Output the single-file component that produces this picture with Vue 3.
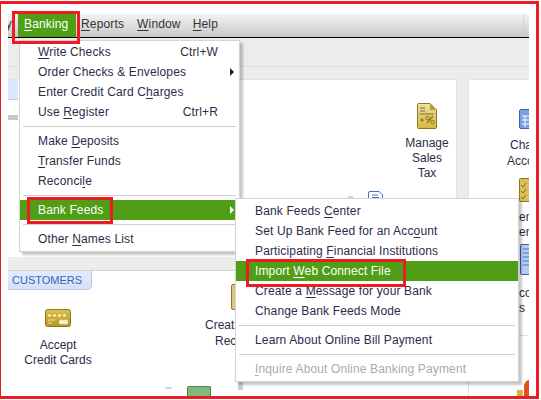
<script setup>
const top = [
  { b: 'y', cls: 'clip' },
  { b: '', k: 'B', a: 'anking', cls: 'active' },
  { b: '', k: 'R', a: 'eports' },
  { b: '', k: 'W', a: 'indow' },
  { b: '', k: 'H', a: 'elp' }
]
const main = [
  { b: '', k: 'W', a: 'rite Checks', s: 'Ctrl+W' },
  { b: 'Order Checks & Envelopes', arrow: true },
  { b: 'Enter Credit Card C', k: 'h', a: 'arges' },
  { b: 'Use ', k: 'R', a: 'egister', s: 'Ctrl+R' },
  { sep: true },
  { b: 'Make ', k: 'D', a: 'eposits' },
  { b: '', k: 'T', a: 'ransfer Funds' },
  { b: 'Reconci', k: 'l', a: 'e' },
  { sep: true },
  { b: 'Bank Feeds', arrow: true, on: true },
  { sep: true },
  { b: 'Other ', k: 'N', a: 'ames List' }
]
const sub = [
  { b: 'Bank Feeds ', k: 'C', a: 'enter' },
  { b: 'Set Up Bank Feed for an Acc', k: 'o', a: 'unt' },
  { b: 'Participating ', k: 'F', a: 'inancial Institutions' },
  { b: 'Import ', k: 'W', a: 'eb Connect File', on: true },
  { b: 'Create a ', k: 'M', a: 'essage for your Bank' },
  { b: 'Change Bank Feeds Mode' },
  { sep: true },
  { b: 'Learn About Online Bill Payment' },
  { sep: true },
  { b: '', k: 'I', a: 'nquire About Online Banking Payment', off: true }
]
</script>

<template>
  <div class="frame">
    <div class="bar">
      <span v-for="t in top" :key="t.b + t.a" class="bar-item" :class="t.cls">{{ t.b }}<u v-if="t.k">{{ t.k }}</u>{{ t.a }}</span>
      <i class="bar-rule"></i>
    </div>
    <div class="strip"></div>
    <div class="work">
      <div class="col-left">
        <section class="panel upper">
          <i class="tab-stub"></i>
          <i class="grey-stub"></i>
          <figure class="node tax">
            <svg width="20" height="26" viewBox="0 0 20 26">
              <defs><linearGradient id="g1" x1="0" y1="0" x2="0" y2="1"><stop offset="0" stop-color="#efe0a0"/><stop offset="1" stop-color="#d8b83c"/></linearGradient></defs>
              <path d="M1.500 .5H13L19.500 7V24.500a1 1 0 0 1-1 1H1.500a1 1 0 0 1-1-1V1.500a1 1 0 0 1 1-1Z" fill="url(#g1)" stroke="#8f7420"/>
              <path d="M13 .5V7H19.500Z" fill="#b89a3c"/>
              <path d="M3 5H8M3 8H8M2.500 11H17" stroke="#7c6a28" stroke-width="1"/>
              <path d="M3 17H7M5 15V19M10 20L16 13" stroke="#8a7426" stroke-width="1.200" fill="none"/>
              <circle cx="10.500" cy="15" r="1.800" fill="none" stroke="#8a7426"/><circle cx="15.500" cy="19" r="1.800" fill="none" stroke="#8a7426"/>
            </svg>
            <figcaption>Manage<br>Sales<br>Tax</figcaption>
          </figure>
          <svg class="peek-doc" width="15" height="8" viewBox="0 0 15 8"><path d="M.5 8V2a1.500 1.500 0 0 1 1.500-1.500H11L14.500 4V8Z" fill="#fff" stroke="#4a6fc0"/><path d="M4 4H10M4 6.500H11" stroke="#4a6fc0"/></svg>
          <i class="bump b1"></i>
        </section>
        <section class="panel lower">
          <div class="tab">CUSTOMERS</div>
          <figure class="node accept">
            <svg width="26" height="18" viewBox="0 0 26 18">
              <defs><linearGradient id="g2" x1="0" y1="0" x2="0" y2="1"><stop offset="0" stop-color="#dcc050"/><stop offset="1" stop-color="#b8961e"/></linearGradient></defs>
              <rect x=".5" y=".5" width="25" height="17" rx="2" fill="url(#g2)" stroke="#8f7a20"/>
              <path d="M3 6.500H6M8 6.500H11M13 6.500H16M18 6.500H21" stroke="#fff6cc" stroke-width="2"/>
              <path d="M3 11H10M3 14H7" stroke="#f2e4a0"/>
              <circle cx="16.500" cy="13" r="2.500" fill="#f6efcc"/><circle cx="20.500" cy="13" r="2.500" fill="#f6efcc"/>
            </svg>
            <figcaption>Accept<br>Credit Cards</figcaption>
          </figure>
          <i class="peek-rec"></i>
          <p class="label create">Creat<br>&nbsp;&nbsp;&nbsp;Rec</p>
          <i class="stub-v"></i>
          <i class="bump b2"></i>
          <i class="peek-green"></i>
          <i class="bump b3"></i>
        </section>
      </div>
      <div class="col-right">
        <section class="panel r-top">
          <svg class="peek-blue" width="10" height="20" viewBox="0 0 10 20"><rect x=".5" y=".5" width="20" height="19" rx="1.500" fill="#7f9fe4" stroke="#3d62b4"/><path d="M3 7H10M3 11H10M3 15H10M6 7V18" stroke="#fff"/></svg>
          <p class="label cha">Cha<br>Acco</p>
          <svg class="peek-check" width="10" height="24" viewBox="0 0 10 24"><rect x=".5" y=".5" width="20" height="23" rx="1" fill="#d8bf58" stroke="#8f7420"/><path d="M2 7L4 9L7 5M2 13L4 15L7 11M2 19L4 21L7 17" stroke="#7c6a28" fill="none"/></svg>
          <p class="label en">en<br>en</p>
          <svg class="peek-doc2" width="9" height="31" viewBox="0 0 9 31"><rect x=".5" y=".5" width="20" height="30" rx="1" fill="#b8cdf4" stroke="#3d62b4"/><path d="M3 5H9M3 9H9M3 13H9M3 17H9M3 21H9" stroke="#4a6fc0"/></svg>
          <p class="label cc">cc<br>s</p>
        </section>
        <section class="panel r-low">
          <i class="peek-yellow"></i>
          <i class="peek-orange"></i>
        </section>
      </div>
    </div>

    <div class="menu menu-main">
      <template v-for="(m, i) in main" :key="i">
        <div v-if="m.sep" class="sep"></div>
        <div v-else class="row" :class="{ on: m.on }">
          <span>{{ m.b }}<u v-if="m.k">{{ m.k }}</u>{{ m.a }}</span>
          <span v-if="m.s" class="short">{{ m.s }}</span>
          <i v-if="m.arrow" class="arrow"></i>
        </div>
      </template>
    </div>
    <div class="menu menu-sub">
      <template v-for="(m, i) in sub" :key="i">
        <div v-if="m.sep" class="sep"></div>
        <div v-else class="row" :class="{ on: m.on, off: m.off }">
          <span>{{ m.b }}<u v-if="m.k">{{ m.k }}</u>{{ m.a }}</span>
        </div>
      </template>
    </div>

    <i class="mark mark-banking"></i>
    <i class="mark mark-feeds"></i>
    <i class="mark mark-import"></i>
  </div>
</template>

<style>
html, body { margin: 0; background: #fff; overflow: hidden; }
</style>

<style scoped>
.frame {
  position: relative;
  box-sizing: border-box;
  width: 539px;
  height: 398px;
  margin-top: 1px;
  border: 3px solid #ed1c24;
  border-left-width: 1px;
  padding: 10px 7px 0;
  display: flex;
  flex-direction: column;
  background: #fff;
  font: 12px/15px "Liberation Sans", Arial, sans-serif;
  color: #2c2c48;
  overflow: hidden;
}
u { text-underline-offset: 2px; }

.bar {
  position: relative;
  flex: none;
  height: 23px;
  display: flex;
  border-bottom: 1px solid #000;
  background: linear-gradient(#f3f3f3, #c9c9c9);
  color: #333;
  letter-spacing: .15px;
  line-height: 21px;
}
.bar-item { padding: 0 6px; height: 23px; }
.bar-item.clip { width: 4px; padding: 0 6px 0 0; overflow: hidden; direction: rtl; }
.bar-item.active { background: #4f9e16; color: #fff; width: 46px; }
.bar-item:nth-child(3) { margin-left: -1px; }
.bar-item:nth-child(4) { margin-left: 1px; }
.bar-rule { position: absolute; left: 515px; top: 0; bottom: 0; width: 1px; background: #d5d5d5; }

.strip {
  flex: none;
  height: 28px;
  background: #ececec;
  border-bottom: 1px solid #dcdcdc;
}
.work {
  flex: 1;
  min-height: 0;
  display: grid;
  grid-template-columns: 449px 61px;
  gap: 0 11px;
  padding-top: 12px;
  background: #ececec;
  overflow: hidden;
}
.col-left, .col-right { display: flex; flex-direction: column; min-height: 0; }
.col-left { gap: 13px; }
.col-right { gap: 10px; }
.panel {
  position: relative;
  box-sizing: border-box;
  background: #fff;
  border: 1px solid #e2e2e2;
  border-width: 1px 1px 0 0;
  overflow: hidden;
}
.upper { flex: none; height: 178px; }
.lower { flex: 1; border-right: 0; width: 528px; border-top-color: #d4d4d4; }
.r-top { flex: none; height: 246px; border-right: 0; border-left-width: 1px; }
.r-low { flex: 1; border-right: 0; border-left-width: 1px; }

.tab-stub { position: absolute; left: 0; top: 0; width: 10px; height: 19px; background: #dbe7fa; border-bottom: 1px solid #c2cbdc; }
.grey-stub { position: absolute; left: 0; top: 35px; width: 10px; height: 5px; background: #c8c8c8; }

.node { position: absolute; margin: 0; text-align: center; display: flex; flex-direction: column; align-items: center; }
.tax { left: 389px; top: 23px; width: 60px; gap: 7px; }
.accept { left: 0; top: 38px; width: 100px; gap: 11px; }
.peek-doc { position: absolute; left: 360px; top: 111px; }
.label { position: absolute; margin: 0; white-space: nowrap; }
.bump { position: absolute; background: #d0d0d0; border-radius: 4px 4px 0 0; }
.b1 { left: 339px; top: 116px; width: 7px; height: 3px; }
.b2 { left: 157px; top: 116px; width: 7px; height: 2px; }
.b3 { left: 488px; top: 117px; width: 7px; height: 2px; }

.tab {
  width: 84px;
  height: 19px;
  box-sizing: border-box;
  background: linear-gradient(#e2ecfd, #d4e1f8);
  border: 1px solid #b9c5dc;
  border-width: 0 1px 1px 0;
  border-radius: 0 0 5px 0;
  color: #3c62b8;
  padding-left: 4px;
  font-size: 11px;
  line-height: 18px;
}
.peek-rec { position: absolute; left: 223px; top: 13px; width: 8px; height: 26px; background: #dcc676; border: 1px solid #8f7a2c; border-radius: 2px; box-sizing: border-box; }
.create { left: 197px; top: 46px; line-height: 16px; }
.stub-v { position: absolute; left: 230px; top: 111px; width: 5px; height: 8px; background: #cfcfcf; }
.peek-green { position: absolute; left: 179px; top: 115px; width: 24px; height: 11px; background: #7fb878; border: 1px solid #4e7e4a; border-bottom: 0; border-radius: 2px 2px 0 0; box-sizing: border-box; }

.peek-blue { position: absolute; left: 50px; top: 29px; }
.cha { left: 38px; top: 57px; line-height: 16px; text-indent: 3px; }
.peek-check { position: absolute; left: 50px; top: 98px; }
.en { left: 50px; top: 130px; }
.peek-doc2 { position: absolute; left: 51px; top: 164px; }
.cc { left: 50px; top: 206px; }
.peek-yellow { position: absolute; left: 48px; top: 54px; width: 6px; height: 6px; background: #d9b23c; }
.peek-orange { position: absolute; left: 55px; top: 44px; width: 12px; height: 20px; background: #e2501c; border-radius: 6px 0 0 0; }

.menu {
  position: absolute;
  box-sizing: border-box;
  background: #fff;
  border: 1px solid #d4d4d4;
  box-shadow: 3px 3px 2px rgba(0, 0, 0, .22);
  letter-spacing: .14px;
}
.menu-main { left: 18px; top: 36px; width: 221px; height: 212px; padding-top: 1px; }
.menu-sub { left: 234px; top: 194px; width: 284px; height: 184px; padding-top: 2px; }
.row {
  position: relative;
  height: 20px;
  display: flex;
  align-items: center;
  justify-content: space-between;
  padding-left: 18px;
}
.menu-sub .row { padding-left: 19px; }
.row.on { background: #4f9e16; color: #fff; }
.row.off { color: #aaa; }
.short { position: absolute; right: 21px; }
.arrow {
  position: absolute;
  right: 5px;
  top: 6px;
  border: 4px solid transparent;
  border-left: 4px solid #222;
  border-right: 0;
}
.on .arrow { border-left-color: #fff; }
.sep { height: 9px; position: relative; }
.sep::after { content: ""; position: absolute; left: 3px; right: 3px; top: 4px; height: 1px; background: #cfcfcf; }

.mark { position: absolute; box-sizing: border-box; border: 3px solid #ed1c24; }
.mark-banking { left: 11px; top: 7px; width: 68px; height: 33px; }
.mark-feeds { left: 26px; top: 193px; width: 86px; height: 27px; }
.mark-import { left: 245px; top: 255px; width: 160px; height: 28px; }
</style>
